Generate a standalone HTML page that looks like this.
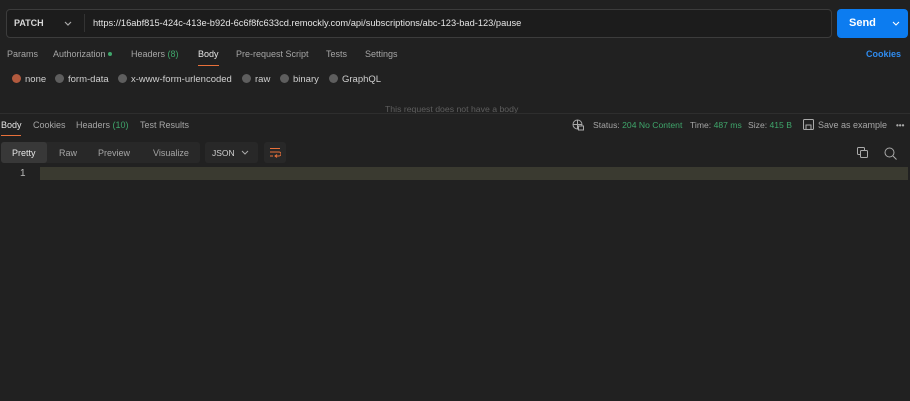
<!DOCTYPE html>
<html><head><style>
*{margin:0;padding:0;box-sizing:border-box}
body{width:910px;height:401px;background:#212121;font-family:"Liberation Sans",sans-serif;font-size:9px;color:#a6a6a6;position:relative;overflow:hidden}
.a{position:absolute;white-space:nowrap}
.g{color:#3fa66b}
.r{font-size:9.5px;color:#d0d0d0}
.dot{display:inline-block;width:9px;height:9px;border-radius:50%;background:#5e5e5e;vertical-align:-1px;margin-right:4px}
</style></head><body>
<div class="a" style="left:6px;top:9px;width:826px;height:29px;border:1px solid #3c3c3c;border-radius:4px;background:#1c1c1c"></div>
<div class="a" style="left:14px;top:18px;color:#d8d8d8;font-weight:bold;font-size:9px">PATCH</div>
<svg class="a" style="left:64px;top:21px" width="8" height="6"><path d="M1 1l3 3 3-3" stroke="#aaa" fill="none" stroke-width="1.2"/></svg>
<div class="a" style="left:84px;top:14px;width:1px;height:18px;background:#333"></div>
<div class="a" style="left:93px;top:18px;color:#e6e6e6;font-size:9.3px">https://16abf815-424c-413e-b92d-6c6f8fc633cd.remockly.com/api/subscriptions/abc-123-bad-123/pause</div>
<div class="a" style="left:837px;top:9px;width:71px;height:29px;background:#0c7cf0;border-radius:4px"></div>
<div class="a" style="left:849px;top:17px;color:#fff;font-weight:bold;font-size:11px">Send</div>
<svg class="a" style="left:892px;top:21px" width="8" height="5"><path d="M1 1l3 3 3-3" stroke="#fff" fill="none" stroke-width="1.1"/></svg>
<div class="a" style="left:7px;top:49px">Params</div>
<div class="a" style="left:53px;top:49px">Authorization <span style="display:inline-block;width:4px;height:4px;border-radius:50%;background:#3fa66b;vertical-align:1px"></span></div>
<div class="a" style="left:131px;top:49px">Headers <span class="g">(8)</span></div>
<div class="a" style="left:198px;top:49px;color:#e6e6e6">Body</div>
<div class="a" style="left:198px;top:65px;width:21px;height:1px;background:#e8703a"></div>
<div class="a" style="left:236px;top:49px">Pre-request Script</div>
<div class="a" style="left:326px;top:49px">Tests</div>
<div class="a" style="left:365px;top:49px">Settings</div>
<div class="a" style="left:866px;top:49px;color:#2f8cf0;font-weight:bold">Cookies</div>
<div class="a r" style="left:12px;top:74px"><span class="dot" style="background:#b25a3e"></span>none</div>
<div class="a r" style="left:55px;top:74px"><span class="dot"></span>form-data</div>
<div class="a r" style="left:118px;top:74px"><span class="dot"></span>x-www-form-urlencoded</div>
<div class="a r" style="left:242px;top:74px"><span class="dot"></span>raw</div>
<div class="a r" style="left:280px;top:74px"><span class="dot"></span>binary</div>
<div class="a r" style="left:329px;top:74px"><span class="dot"></span>GraphQL</div>
<div class="a" style="left:385px;top:104px;color:#5e5e5e;font-size:8.7px">This request does not have a body</div>
<div class="a" style="left:0;top:113px;width:910px;height:1px;background:#2e2e2e"></div>
<div class="a" style="left:1px;top:120px;color:#e6e6e6">Body</div>
<div class="a" style="left:1px;top:135px;width:20px;height:1px;background:#e8703a"></div>
<div class="a" style="left:33px;top:120px">Cookies</div>
<div class="a" style="left:76px;top:120px">Headers <span class="g">(10)</span></div>
<div class="a" style="left:140px;top:120px">Test Results</div>
<svg class="a" style="left:572px;top:119px" width="12" height="12"><circle cx="5.5" cy="5.5" r="4.5" stroke="#aaa" fill="none"/><path d="M1 5.5h9M5.5 1v9" stroke="#aaa"/><rect x="6.5" y="7" width="5" height="4" fill="#212121" stroke="#aaa"/></svg>
<div class="a" style="left:593px;top:120px;font-size:8.6px">Status: <span class="g">204 No Content</span></div>
<div class="a" style="left:690px;top:120px;font-size:8.6px">Time: <span class="g">487 ms</span></div>
<div class="a" style="left:748px;top:120px;font-size:8.6px">Size: <span class="g">415 B</span></div>
<svg class="a" style="left:803px;top:119px" width="11" height="11"><rect x="0.5" y="0.5" width="10" height="10" rx="1" stroke="#aaa" fill="none"/><rect x="3" y="6" width="5" height="4.5" stroke="#aaa" fill="none"/></svg>
<div class="a" style="left:818px;top:120px">Save as example</div>
<div class="a" style="left:896px;top:121px;color:#aaa;font-weight:bold;font-size:8px">•••</div>
<div class="a" style="left:1px;top:142px;width:199px;height:21px;background:#282828;border-radius:3px"></div>
<div class="a" style="left:1px;top:142px;width:46px;height:21px;background:#383838;border-radius:3px"></div>
<div class="a" style="left:12px;top:148px;color:#e6e6e6">Pretty</div>
<div class="a" style="left:59px;top:148px">Raw</div>
<div class="a" style="left:98px;top:148px">Preview</div>
<div class="a" style="left:153px;top:148px">Visualize</div>
<div class="a" style="left:205px;top:142px;width:53px;height:21px;background:#282828;border-radius:3px"></div>
<div class="a" style="left:212px;top:148px;color:#d0d0d0;font-size:8.5px">JSON</div>
<svg class="a" style="left:241px;top:150px" width="8" height="5"><path d="M1 1l3 3 3-3" stroke="#aaa" fill="none"/></svg>
<div class="a" style="left:264px;top:142px;width:22px;height:21px;background:#282828;border-radius:3px"></div>
<svg class="a" style="left:269px;top:147px" width="12" height="11"><path d="M1 1.5h10M1 5h9a2 2 0 010 4H6M8 7.5L6 9l2 1.5M1 9h3" stroke="#e8703a" fill="none"/></svg>
<svg class="a" style="left:857px;top:147px" width="12" height="12"><rect x="0.5" y="0.5" width="7" height="7" rx="1" stroke="#aaa" fill="none"/><rect x="3.5" y="3.5" width="7" height="7" rx="1" stroke="#aaa" fill="#212121"/></svg>
<svg class="a" style="left:884px;top:147px" width="13" height="13"><circle cx="5.5" cy="5.5" r="4.5" stroke="#aaa" fill="none"/><path d="M9 9l3.5 3.5" stroke="#aaa"/></svg>
<div class="a" style="left:20px;top:168px;color:#bbb;font-size:10px">1</div>
<div class="a" style="left:40px;top:167px;width:868px;height:13px;background:#3a3a30"></div>
</body></html>
